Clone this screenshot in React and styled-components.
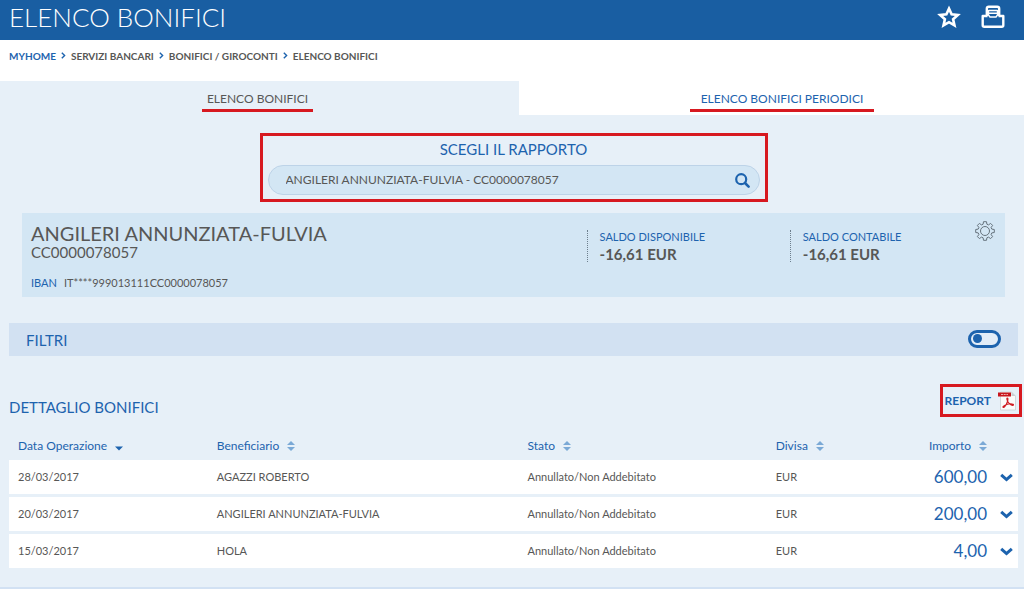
import React, { useState } from "react";
import styled, { createGlobalStyle } from "styled-components";

const GlobalStyle = createGlobalStyle`
  * {
    box-sizing: border-box;
  }
  body {
    margin: 0;
    background: #e7f0f8;
    color: #575756;
    font-family: Lato, "Liberation Sans", sans-serif;
    font-size: 12px;
    line-height: 16px;
  }
  button, input {
    font: inherit;
    color: inherit;
  }
  a {
    color: inherit;
    text-decoration: none;
  }
`;

const Header = styled.header`
  display: flex;
  justify-content: space-between;
  align-items: center;
  height: 40px;
  padding: 0 19px 6px 9px;
  background: #195ea2;
  color: #fff;
`;

const PageTitle = styled.h1`
  margin: 0;
  font-size: 26px;
  font-weight: 300;
  line-height: 34px;
`;

const HeaderActions = styled.div`
  display: flex;
  align-items: center;
  gap: 20px;
`;

const IconButton = styled.button`
  display: flex;
  padding: 0;
  border: 0;
  background: none;
  cursor: pointer;
`;

const Breadcrumb = styled.nav`
  display: flex;
  align-items: center;
  gap: 5px;
  height: 41px;
  padding: 0 9px 10px;
  background: #fff;
  font-size: 10px;
  font-weight: 700;

  a:first-child {
    color: #1d63ae;
  }
`;

const Tabs = styled.div`
  display: grid;
  grid-template-columns: 519fr 505fr;
  background: #fff;
`;

const Tab = styled.button`
  display: flex;
  justify-content: center;
  align-items: flex-end;
  height: 34px;
  padding: ${props => (props.$active ? "0 4px 3px 0" : "0 0 3px 21px")};
  border: 0;
  background: ${props => (props.$active ? "#e7f0f8" : "#fff")};
  color: ${props => (props.$active ? "#575756" : "#1d63ae")};
  cursor: pointer;
`;

const TabLabel = styled.span`
  padding: 0 ${props => (props.$wide ? "11px" : "5px")} 2px;
  border-bottom: 3px solid #d71920;
  line-height: 16px;
`;

const Main = styled.main`
  padding: 18px 6px 16px 9px;
  border-bottom: 2px solid #d2e1f3;
`;

const SearchBox = styled.form`
  width: 508px;
  max-width: 100%;
  margin: 0 auto 11px;
  padding: 3px 5px 4px;
  border: 3px solid #d71920;
  text-align: center;
`;

const SearchLabel = styled.label`
  display: block;
  margin-bottom: 6px;
  color: #1d63ae;
  font-size: 15px;
  line-height: 20px;
`;

const SearchField = styled.div`
  display: flex;
  align-items: center;
  height: 30px;
  padding: 0 9px 0 17px;
  border: 1px solid #bdd3e8;
  border-radius: 15px;
  background: #d3e6f4;

  input {
    flex: 1;
    min-width: 0;
    padding: 0;
    border: 0;
    outline: 0;
    background: none;
  }
`;

const Account = styled.section`
  display: grid;
  grid-template-columns: 555fr 203fr 185fr 20px;
  height: 84px;
  margin: 0 13px 26px;
  padding: 8px 10px 0 9px;
  background: #d3e6f4;
`;

const AccountName = styled.h2`
  margin: 0;
  font-size: 20px;
  font-weight: 400;
  line-height: 24px;
`;

const AccountNumber = styled.div`
  font-size: 15px;
  line-height: 14px;
`;

const Iban = styled.div`
  display: flex;
  gap: 7px;
  margin-top: 16px;
  font-size: 11px;
`;

const Blue = styled.span`
  color: #1d63ae;
`;

const Balance = styled.div`
  display: flex;
  flex-direction: column;
  height: 32px;
  margin-top: 9px;
  padding-left: 12px;
  border-left: 1px dotted #6d7f8d;
  font-size: 11px;
  line-height: 13px;

  strong {
    font-size: 15px;
    line-height: 22px;
  }
`;

const Filters = styled.section`
  display: flex;
  justify-content: space-between;
  align-items: center;
  height: 33px;
  margin-bottom: 28px;
  padding: 0 17px;
  background: #d2e1f2;
`;

const SectionTitle = styled.h2`
  margin: 0;
  color: #1d63ae;
  font-size: 15px;
  font-weight: 400;
  line-height: 20px;
`;

const Toggle = styled.input`
  appearance: none;
  display: flex;
  align-items: center;
  width: 33px;
  height: 18px;
  margin: 0 0 2px;
  padding: 0 2px;
  border: 3px solid #1d63ae;
  border-radius: 9px;
  background: #e3edf8;
  cursor: pointer;

  &::before {
    content: "";
    width: 9px;
    height: 9px;
    border-radius: 50%;
    background: #1d63ae;
  }
  &:checked {
    justify-content: flex-end;
  }
`;

const DetailHeader = styled.div`
  display: flex;
  justify-content: space-between;
  align-items: center;
  margin-bottom: 19px;

  h2 {
    padding-top: 12px;
  }
`;

const ReportLink = styled.a`
  display: flex;
  align-items: center;
  gap: 6px;
  height: 33px;
  margin-right: -4px;
  padding: 0 2px;
  border: 3px solid #d71920;
  color: #1d63ae;
  font-weight: 700;
`;

const Table = styled.table`
  width: 100%;
  table-layout: fixed;
  border-collapse: separate;
  border-spacing: 0;
`;

const Th = styled.th`
  height: 24px;
  padding: 0 9px 5px;
  color: #1d63ae;
  font-weight: 400;
  text-align: ${props => (props.$right ? "right" : "left")};
  white-space: nowrap;
`;

const SortButton = styled.button`
  display: inline-flex;
  align-items: center;
  gap: 8px;
  padding: 0;
  border: 0;
  background: none;
  cursor: pointer;
`;

const Td = styled.td`
  height: 37px;
  padding: 0 9px;
  border-bottom: 3px solid #e7f0f8;
  background: #fff;
  font-size: 11px;
`;

const AmountTd = styled(Td)`
  color: #1d63ae;
  font-size: 17px;
  text-align: right;
`;

const ToggleTd = styled(Td)`
  padding: 0 5px 0 4px;
`;

const StarIcon = () => (
  <svg width="24" height="24" viewBox="0 0 24 24" fill="none" stroke="#fff" strokeWidth="2.6">
    <path d="M12 3.6 14.6 9.4 20.8 10 16.1 14.2 17.5 20.4 12 17.2 6.5 20.4 7.9 14.2 3.2 10 9.4 9.4Z" />
  </svg>
);

const PrintIcon = () => (
  <svg width="24" height="24" viewBox="0 0 24 24" fill="none" stroke="#fff" strokeWidth="2.4" strokeLinejoin="round">
    <path d="M5.8 11V3.7Q5.8 1.7 7.8 1.7H16.2Q18.200 1.700 18.200 3.700V11" />
    <path d="M6.500 11H1.700V20.300Q1.700 21.800 3.200 21.800H20.800Q22.300 21.800 22.300 20.300V11H17.500" />
    <path d="M7.500 5.500H16.500M8 8.300H16M7.500 5V10L9 12H15L16.500 10V5" strokeWidth="1.400" />
  </svg>
);

const SearchIcon = () => (
  <svg width="15" height="15" viewBox="0 0 15 15" fill="none" stroke="#1d63ae" strokeWidth="2.2">
    <circle cx="6.2" cy="6.2" r="5" />
    <path d="m10 10 3.600 3.600" strokeWidth="2.600" strokeLinecap="round" />
  </svg>
);

const GearIcon = () => (
  <svg width="20" height="20" viewBox="0 0 20 20" fill="none" stroke="#66737d" strokeWidth="1">
    <path d="M8.5.7h3l.4 2.5 1.6.7 2.1-1.5 2 2-1.5 2.1.7 1.6 2.5.4v3l-2.5.4-.7 1.6 1.5 2.1-2 2-2.1-1.5-1.6.7-.4 2.5h-3l-.4-2.5-1.6-.7-2.1 1.5-2-2 1.5-2.1-.7-1.6L.7 11.500v-3l2.500-.4.7-1.600-1.500-2.100 2-2 2.100 1.500 1.600-.7Z" />
    <circle cx="10" cy="10" r="4.5" />
  </svg>
);

const PdfIcon = () => (
  <svg width="20" height="20" viewBox="0 0 20 20">
    <path d="M3.500 1h11L18.500 5v14h-15Z" fill="#fbfbfb" stroke="#cbd0d4" strokeWidth=".8" />
    <path d="M14.500 1v4h4Z" fill="#c9ced2" />
    <path d="M1 1.500h13v4H1Z" fill="#c8161d" />
    <path d="M4 3.500h7" stroke="#eda7a7" strokeWidth="1" strokeDasharray="2 .7" />
    <path d="M10.300 7c1.300 0 .3 3.500-.8 6-1 2.200-3 4-3.600 3.200-.5-1 3.100-2.700 5.800-3.200 2.300-.4 5 0 4.700 1-.4 1.100-3.700-.6-5-2.500C10.100 9.700 9.400 7 10.300 7Z" fill="none" stroke="#cf1d23" strokeWidth="1.200" />
  </svg>
);

const ChevronIcon = () => (
  <svg width="13" height="9" viewBox="0 0 13 9" fill="none" stroke="#1d63ae" strokeWidth="3">
    <path d="m1.200 1.800 5.300 4.800 5.300-4.800" />
  </svg>
);

const CrumbArrow = () => (
  <svg width="5" height="7" viewBox="0 0 5 7" fill="none" stroke="#1d63ae" strokeWidth="1.400">
    <path d="m.8.8 2.800 2.700L.8 6.200" />
  </svg>
);

const SortIcon = ({ sorted }) => (
  <svg width="8" height="10" viewBox="0 0 8 10" fill={sorted ? "#1d63ae" : "#7ba9d6"}>
    {sorted ? <path d="M0 5.500h8L4 9.500Z" /> : <path d="M0 4h8L4 0ZM0 6h8L4 10Z" />}
  </svg>
);

const crumbs = ["MYHOME", "SERVIZI BANCARI", "BONIFICI / GIROCONTI", "ELENCO BONIFICI"];

const columns = ["Data Operazione", "Beneficiario", "Stato", "Divisa", "Importo"];

const transfers = [
  { date: "28/03/2017", payee: "AGAZZI ROBERTO", status: "Annullato/Non Addebitato", currency: "EUR", amount: "600,00" },
  { date: "20/03/2017", payee: "ANGILERI ANNUNZIATA-FULVIA", status: "Annullato/Non Addebitato", currency: "EUR", amount: "200,00" },
  { date: "15/03/2017", payee: "HOLA", status: "Annullato/Non Addebitato", currency: "EUR", amount: "4,00" }
];

const Col = styled.col`
  width: ${props => props.$width};
`;

const App = () => {
  const [account, setAccount] = useState("ANGILERI ANNUNZIATA-FULVIA - CC0000078057");
  const [showFilters, setShowFilters] = useState(false);

  return (
    <>
      <GlobalStyle />
      <Header>
        <PageTitle>ELENCO BONIFICI</PageTitle>
        <HeaderActions>
          <IconButton aria-label="Preferiti"><StarIcon /></IconButton>
          <IconButton aria-label="Stampa"><PrintIcon /></IconButton>
        </HeaderActions>
      </Header>
      <Breadcrumb>
        {crumbs.map((crumb, idx) => (
          <React.Fragment key={crumb}>
            {idx > 0 && <CrumbArrow />}
            <a href="#">{crumb}</a>
          </React.Fragment>
        ))}
      </Breadcrumb>
      <Tabs role="tablist">
        <Tab role="tab" aria-selected="true" $active>
          <TabLabel>ELENCO BONIFICI</TabLabel>
        </Tab>
        <Tab role="tab" aria-selected="false">
          <TabLabel $wide>ELENCO BONIFICI PERIODICI</TabLabel>
        </Tab>
      </Tabs>
      <Main>
        <SearchBox onSubmit={e => e.preventDefault()}>
          <SearchLabel htmlFor="account">SCEGLI IL RAPPORTO</SearchLabel>
          <SearchField>
            <input id="account" value={account} onChange={e => setAccount(e.target.value)} />
            <IconButton aria-label="Cerca"><SearchIcon /></IconButton>
          </SearchField>
        </SearchBox>
        <Account>
          <div>
            <AccountName>ANGILERI ANNUNZIATA-FULVIA</AccountName>
            <AccountNumber>CC0000078057</AccountNumber>
            <Iban>
              <Blue>IBAN</Blue>
              <span>IT****999013111CC0000078057</span>
            </Iban>
          </div>
          <Balance>
            <Blue>SALDO DISPONIBILE</Blue>
            <strong>-16,61 EUR</strong>
          </Balance>
          <Balance>
            <Blue>SALDO CONTABILE</Blue>
            <strong>-16,61 EUR</strong>
          </Balance>
          <div>
            <IconButton aria-label="Impostazioni"><GearIcon /></IconButton>
          </div>
        </Account>
        <Filters>
          <SectionTitle as="label" htmlFor="filters">FILTRI</SectionTitle>
          <Toggle
            id="filters"
            type="checkbox"
            role="switch"
            checked={showFilters}
            onChange={e => setShowFilters(e.target.checked)}
          />
        </Filters>
        <DetailHeader>
          <SectionTitle>DETTAGLIO BONIFICI</SectionTitle>
          <ReportLink href="#">
            REPORT
            <PdfIcon />
          </ReportLink>
        </DetailHeader>
        <Table>
          <colgroup>
            <Col $width="19.7%" />
            <Col $width="30.8%" />
            <Col $width="24.6%" />
            <Col $width="10%" />
            <Col />
            <Col $width="22px" />
          </colgroup>
          <thead>
            <tr>
              {columns.map((column, idx) => (
                <Th key={column} $right={column === "Importo"}>
                  <SortButton>
                    {column}
                    <SortIcon sorted={idx === 0} />
                  </SortButton>
                </Th>
              ))}
              <Th />
            </tr>
          </thead>
          <tbody>
            {transfers.map(transfer => (
              <tr key={transfer.date}>
                <Td>{transfer.date}</Td>
                <Td>{transfer.payee}</Td>
                <Td>{transfer.status}</Td>
                <Td>{transfer.currency}</Td>
                <AmountTd>{transfer.amount}</AmountTd>
                <ToggleTd>
                  <IconButton aria-label="Mostra dettaglio"><ChevronIcon /></IconButton>
                </ToggleTd>
              </tr>
            ))}
          </tbody>
        </Table>
      </Main>
    </>
  );
};

export default App;
